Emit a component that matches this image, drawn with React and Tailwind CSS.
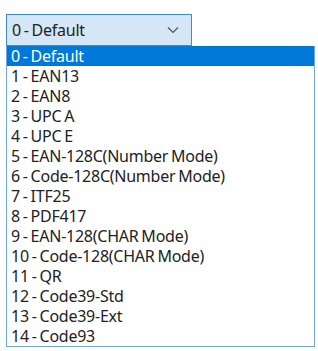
export default function App() {
  const items = [
    "0 - Default",
    "1 - EAN13",
    "2 - EAN8",
    "3 - UPC A",
    "4 - UPC E",
    "5 - EAN-128C(Number Mode)",
    "6 - Code-128C(Number Mode)",
    "7 - ITF25",
    "8 - PDF417",
    "9 - EAN-128(CHAR Mode)",
    "10 - Code-128(CHAR Mode)",
    "11 - QR",
    "12 - Code39-Std",
    "13 - Code39-Ext",
    "14 - Code93",
  ];
  return (
    <div className="w-[318px] h-[351px] bg-white pt-[14px] pl-[6px]" style={{ fontFamily: '"Segoe UI", "Noto Sans", "Open Sans", sans-serif' }}>
      <div className="w-[186px] h-[32px] border border-[#3c8ad6] bg-[#d5e6f6] flex items-center justify-between pl-[5px] pr-[12px]">
        <span className="text-[16px] text-[#222] tracking-[-0.25px] [word-spacing:-1px]">0 - Default</span>
        <svg width="12" height="8" viewBox="0 0 12 8" className="text-[#555]">
          <path d="M1 1.5 L6 6.5 L11 1.5" fill="none" stroke="currentColor" strokeWidth="1.2" />
        </svg>
      </div>
      <div className="w-[309px] border border-[#6fa8e0] border-t-0 bg-white">
        {items.map((t, i) => (
          <div
            key={t}
            className={`h-[20px] leading-[20px] pl-[4px] text-[16px] tracking-[-0.25px] [word-spacing:-1px] ${i === 0 ? "bg-[#0078d7] text-white" : "text-[#222]"}`}
          >
            {t}
          </div>
        ))}
      </div>
    </div>
  );
}
